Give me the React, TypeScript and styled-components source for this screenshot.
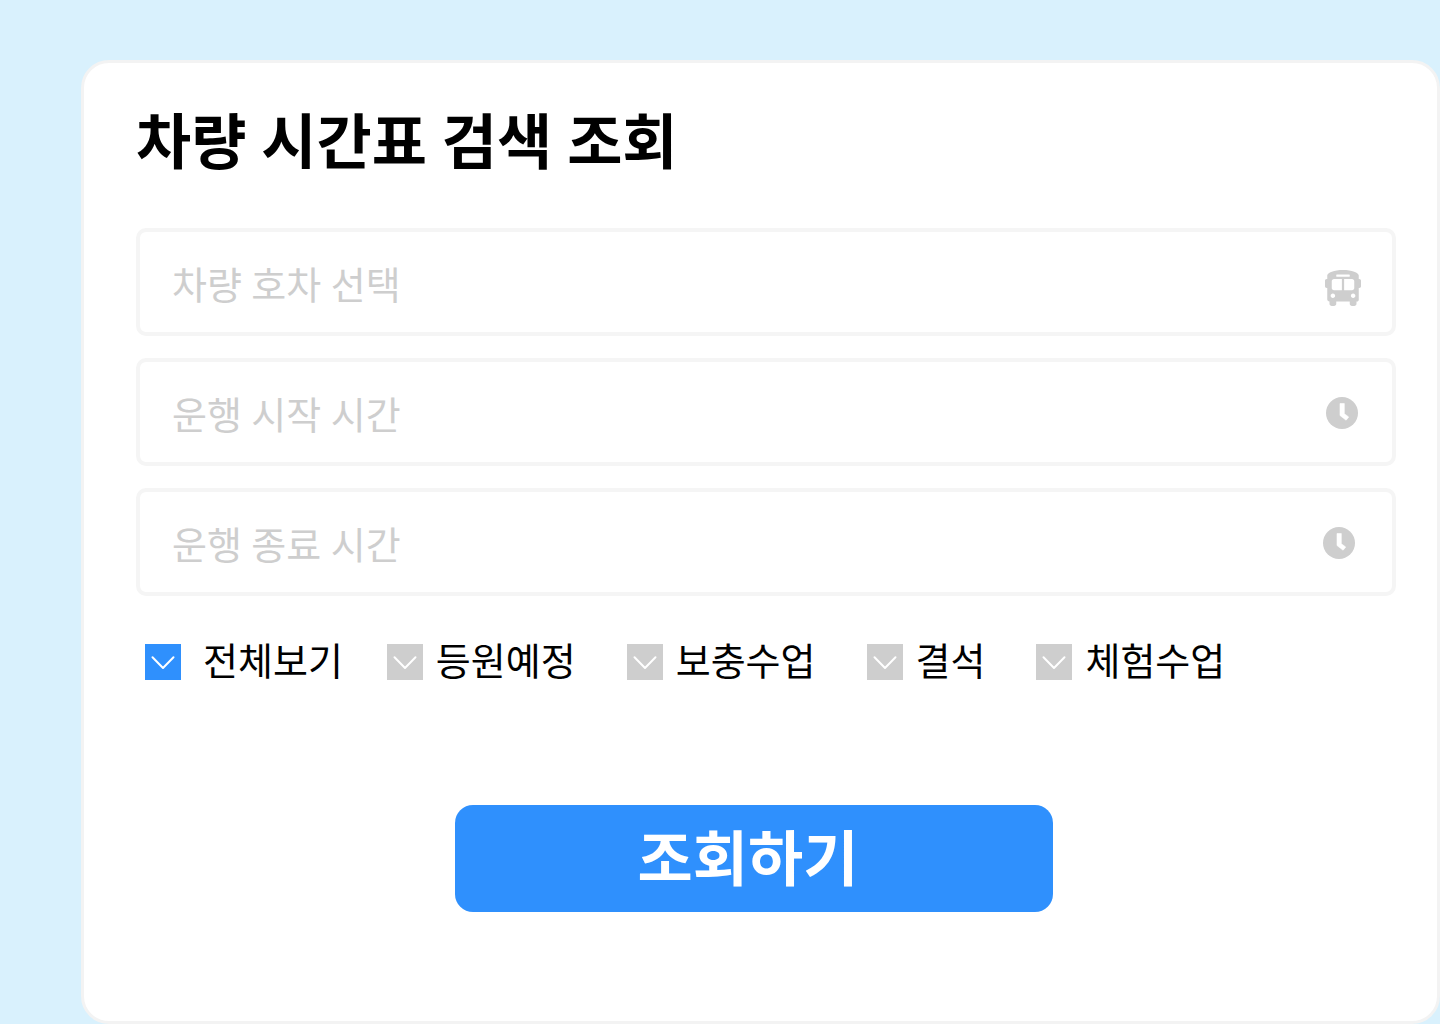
import React from "react";
import styled, { createGlobalStyle } from "styled-components";

const GlobalStyle = createGlobalStyle`
  * { box-sizing: border-box; }
  body {
    margin: 0;
    background: #d9f1fd;
    font-family: Roboto, "Noto Sans CJK KR", sans-serif;
    color: #000;
  }
`;

const Page = styled.main`
  min-height: 100vh;
  padding: 60px 0 0 81px;
  display: flex;
`;

const Card = styled.form`
  flex: 1;
  display: flex;
  flex-direction: column;
  padding: 37px 41px 104px 52px;
  background: #fff;
  border: 3px solid #f3f3f3;
  border-radius: 28px;
`;

const Title = styled.h1`
  margin: 0 0 40px;
  font-size: 60px;
  line-height: 88px;
  font-weight: 700;
`;

const Fields = styled.div`
  display: flex;
  flex-direction: column;
  gap: 22px;
`;

const Field = styled.label<{ $inset: number }>`
  display: flex;
  align-items: center;
  height: 108px;
  padding: 0 ${(p) => p.$inset}px 0 32px;
  border: 4px solid #f5f5f5;
  border-radius: 10px;
  color: #cecece;
`;

const FieldInput = styled.input`
  flex: 1;
  min-width: 0;
  height: 100%;
  padding: 8px 0 0;
  border: 0;
  outline: 0;
  background: transparent;
  font: 400 38px/56px Roboto, "Noto Sans CJK KR", sans-serif;
  color: #000;
  &::placeholder { color: #cecece; opacity: 1; }
`;

const FieldIcon = styled.span`
  display: flex;
  padding-top: 2px;
`;

const Options = styled.div`
  display: flex;
  padding: 38px 0 0 9px;
`;

const Option = styled.label<{ $gap: number; $after: number }>`
  display: flex;
  align-items: center;
  gap: ${(p) => p.$gap}px;
  margin-right: ${(p) => p.$after}px;
  font-size: 38px;
  line-height: 56px;
  white-space: nowrap;
`;

const CheckBox = styled.span`
  position: relative;
  display: flex;
  width: 36px;
  height: 36px;
`;

const CheckInput = styled.input`
  appearance: none;
  width: 36px;
  height: 36px;
  margin: 0;
  background: #cecece;
  &:checked { background: #2f90fd; }
`;

const CheckMark = styled.svg`
  position: absolute;
  inset: 0;
  pointer-events: none;
`;

const Submit = styled.button`
  align-self: center;
  width: 598px;
  height: 107px;
  margin: 115px 24px 0 0;
  padding: 4px 12px 0 0;
  border: 0;
  border-radius: 18px;
  background: #2f90fd;
  color: #fff;
  font: 700 60px/88px Roboto, "Noto Sans CJK KR", sans-serif;
`;

const Bus = () => (
  <svg width="36" height="46" viewBox="0 -142 512 654" fill="currentColor" aria-hidden="true">
    <path d="M488 128h-8V80c0-44.800-99.200-80-224-80S32 35.200 32 80v48h-8c-13.250 0-24 10.740-24 24v80c0 13.250 10.750 24 24 24h8v160c0 17.670 14.330 32 32 32v32c0 17.670 14.330 32 32 32h32c17.670 0 32-14.330 32-32v-32h192v32c0 17.670 14.330 32 32 32h32c17.670 0 32-14.330 32-32v-32h6.400c16 0 25.600-12.800 25.600-25.600V256h8c13.250 0 24-10.750 24-24v-80c0-13.260-10.750-24-24-24zM160 72c0-4.420 3.580-8 8-8h176c4.420 0 8 3.580 8 8v16c0 4.420-3.580 8-8 8H168c-4.420 0-8-3.580-8-8V72zm-48 328c-17.670 0-32-14.330-32-32s14.330-32 32-32 32 14.330 32 32-14.330 32-32 32zm128-112H128c-17.670 0-32-14.330-32-32v-96c0-17.670 14.330-32 32-32h112v160zm32 0V128h112c17.670 0 32 14.330 32 32v96c0 17.670-14.330 32-32 32H272zm128 112c-17.670 0-32-14.330-32-32s14.330-32 32-32 32 14.330 32 32-14.330 32-32 32z" />
  </svg>
);

const Clock = () => (
  <svg width="32" height="32" viewBox="0 0 32 32" aria-hidden="true">
    <circle cx="16" cy="16" r="16" fill="currentColor" />
    <path d="M14 6.500h4.300v10.200l4.400 3.300-2.600 3.200L14 18.500z" fill="#fff" stroke="#fff" strokeWidth=".6" strokeLinejoin="round" />
  </svg>
);

const fields = [
  { name: "bus", label: "차량 호차 선택", inset: 31, Icon: Bus },
  { name: "start", label: "운행 시작 시간", inset: 34, Icon: Clock },
  { name: "end", label: "운행 종료 시간", inset: 37, Icon: Clock },
];

const options = [
  { label: "전체보기", gap: 22, after: 44 },
  { label: "등원예정", gap: 13, after: 51 },
  { label: "보충수업", gap: 13, after: 51 },
  { label: "결석", gap: 13, after: 51 },
  { label: "체험수업", gap: 13, after: 0 },
];

export default function App() {
  return (
    <Page>
      <GlobalStyle />
      <Card onSubmit={(e) => e.preventDefault()}>
        <Title>차량 시간표 검색 조회</Title>
        <Fields>
          {fields.map(({ name, label, inset, Icon }) => (
            <Field key={name} $inset={inset}>
              <FieldInput name={name} placeholder={label} aria-label={label} />
              <FieldIcon>
                <Icon />
              </FieldIcon>
            </Field>
          ))}
        </Fields>
        <Options>
          {options.map(({ label, gap, after }, i) => (
            <Option key={label} $gap={gap} $after={after}>
              <CheckBox>
                <CheckInput type="checkbox" defaultChecked={i === 0} />
                <CheckMark width="36" height="36" viewBox="0 0 36 36" fill="none" stroke="#fff" strokeWidth="2" strokeLinecap="round" strokeLinejoin="round" aria-hidden="true">
                  <path d="M7.500 13.300L18 24l10.500-10.700" />
                </CheckMark>
              </CheckBox>
              {label}
            </Option>
          ))}
        </Options>
        <Submit type="submit">조회하기</Submit>
      </Card>
    </Page>
  );
}
